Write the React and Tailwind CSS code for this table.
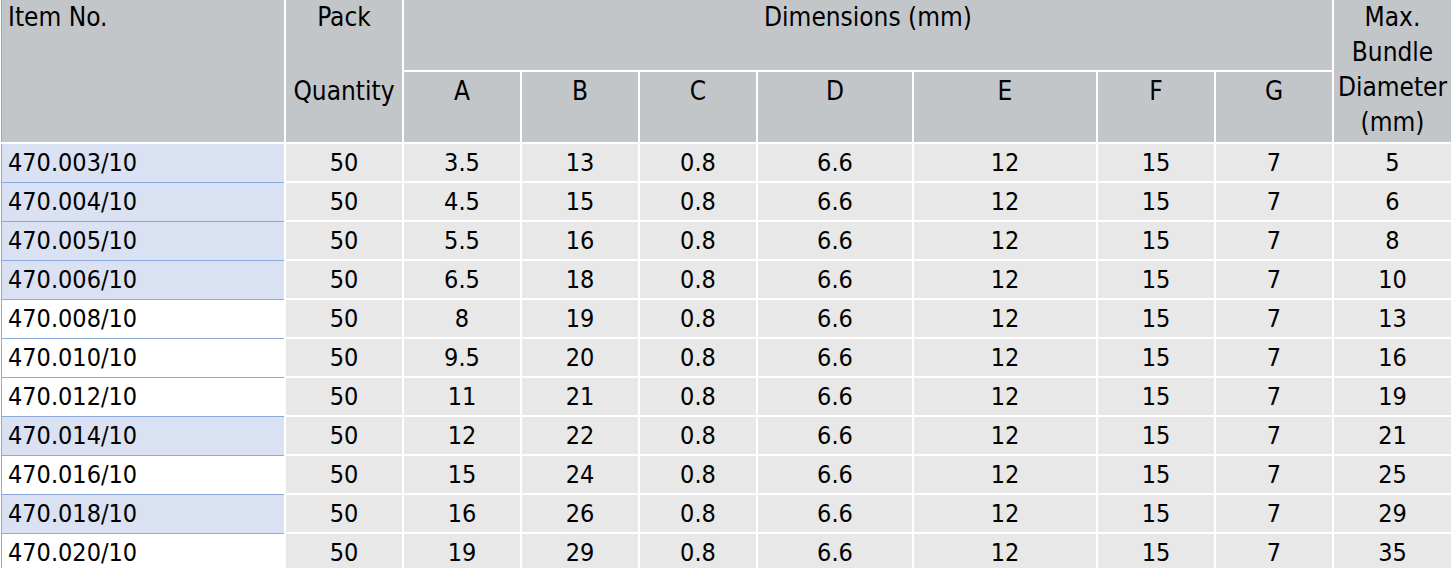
import React from 'react';

const rows = [
  ['470.003/10', '50', '3.5', '13', '0.8', '6.6', '12', '15', '7', '5', true],
  ['470.004/10', '50', '4.5', '15', '0.8', '6.6', '12', '15', '7', '6', true],
  ['470.005/10', '50', '5.5', '16', '0.8', '6.6', '12', '15', '7', '8', true],
  ['470.006/10', '50', '6.5', '18', '0.8', '6.6', '12', '15', '7', '10', true],
  ['470.008/10', '50', '8', '19', '0.8', '6.6', '12', '15', '7', '13', false],
  ['470.010/10', '50', '9.5', '20', '0.8', '6.6', '12', '15', '7', '16', false],
  ['470.012/10', '50', '11', '21', '0.8', '6.6', '12', '15', '7', '19', false],
  ['470.014/10', '50', '12', '22', '0.8', '6.6', '12', '15', '7', '21', true],
  ['470.016/10', '50', '15', '24', '0.8', '6.6', '12', '15', '7', '25', false],
  ['470.018/10', '50', '16', '26', '0.8', '6.6', '12', '15', '7', '29', true],
  ['470.020/10', '50', '19', '29', '0.8', '6.6', '12', '15', '7', '35', false],
];

// widths of the value columns: Pack, A, B, C, D, E, F, G, Max
const colWidths = [
  'w-[116px]',
  'w-[116px]',
  'w-[116px]',
  'w-[116px]',
  'w-[154px]',
  'w-[182px]',
  'w-[116px]',
  'w-[116px]',
  'w-[117px]',
];

const subHeads = [
  { label: 'A', w: 'w-[116px]' },
  { label: 'B', w: 'w-[116px]' },
  { label: 'C', w: 'w-[116px]' },
  { label: 'D', w: 'w-[154px]' },
  { label: 'E', w: 'w-[182px]' },
  { label: 'F', w: 'w-[116px]' },
  { label: 'G', w: 'w-[116px]' },
];

const HeaderRow = () => (
  <div className="flex h-[142px] gap-[2px] text-[26px]">
    <div className="ml-px w-[283px] shrink-0 border-l border-[#a6a6a6] bg-[#c3c6c9] pl-[6px] leading-[35px]">
      Item No.
    </div>
    <div className="flex w-[116px] shrink-0 flex-col items-center bg-[#c3c6c9] leading-[35px]">
      <div className="h-[74px]">Pack</div>
      <div>Quantity</div>
    </div>
    <div className="flex w-[928px] shrink-0 flex-col gap-[2px]">
      <div className="h-[70px] bg-[#c3c6c9] text-center leading-[35px]">Dimensions (mm)</div>
      <div className="flex h-[70px] gap-[2px]">
        {subHeads.map((s) => (
          <div key={s.label} className={`${s.w} shrink-0 bg-[#c3c6c9] pt-[2px] text-center leading-[35px]`}>
            {s.label}
          </div>
        ))}
      </div>
    </div>
    <div className="w-[117px] shrink-0 bg-[#c3c6c9] text-center leading-[35px]">
      Max.
      <br />
      Bundle
      <br />
      Diameter
      <br />
      (mm)
    </div>
  </div>
);

const DataRow = ({ row }) => {
  const [item, ...values] = row.slice(0, 10);
  const highlighted = row[10];

  return (
    <div className="flex h-[39px] items-start gap-[2px]">
      <div
        className={`ml-px flex h-[39px] w-[283px] shrink-0 items-center border-b border-l border-b-[#8eaadb] border-l-[#a6a6a6] pl-[6px] ${
          highlighted ? 'bg-[#d9e1f2]' : 'bg-white'
        }`}
      >
        {item}
      </div>
      {values.map((v, i) => (
        <div
          key={i}
          className={`${colWidths[i]} flex h-[37px] shrink-0 items-center justify-center bg-[#e8e8e8]`}
        >
          {v}
        </div>
      ))}
    </div>
  );
};

const App = () => {
  return (
    <div className="h-[568px] w-[1451px] overflow-hidden bg-white font-['DejaVu_Sans_Condensed','Liberation_Sans',sans-serif] text-[25px] text-black">
      <HeaderRow />
      <div className="mt-[2px] flex flex-col">
        {rows.map((row) => (
          <DataRow key={row[0]} row={row} />
        ))}
      </div>
    </div>
  );
};

export default App;
